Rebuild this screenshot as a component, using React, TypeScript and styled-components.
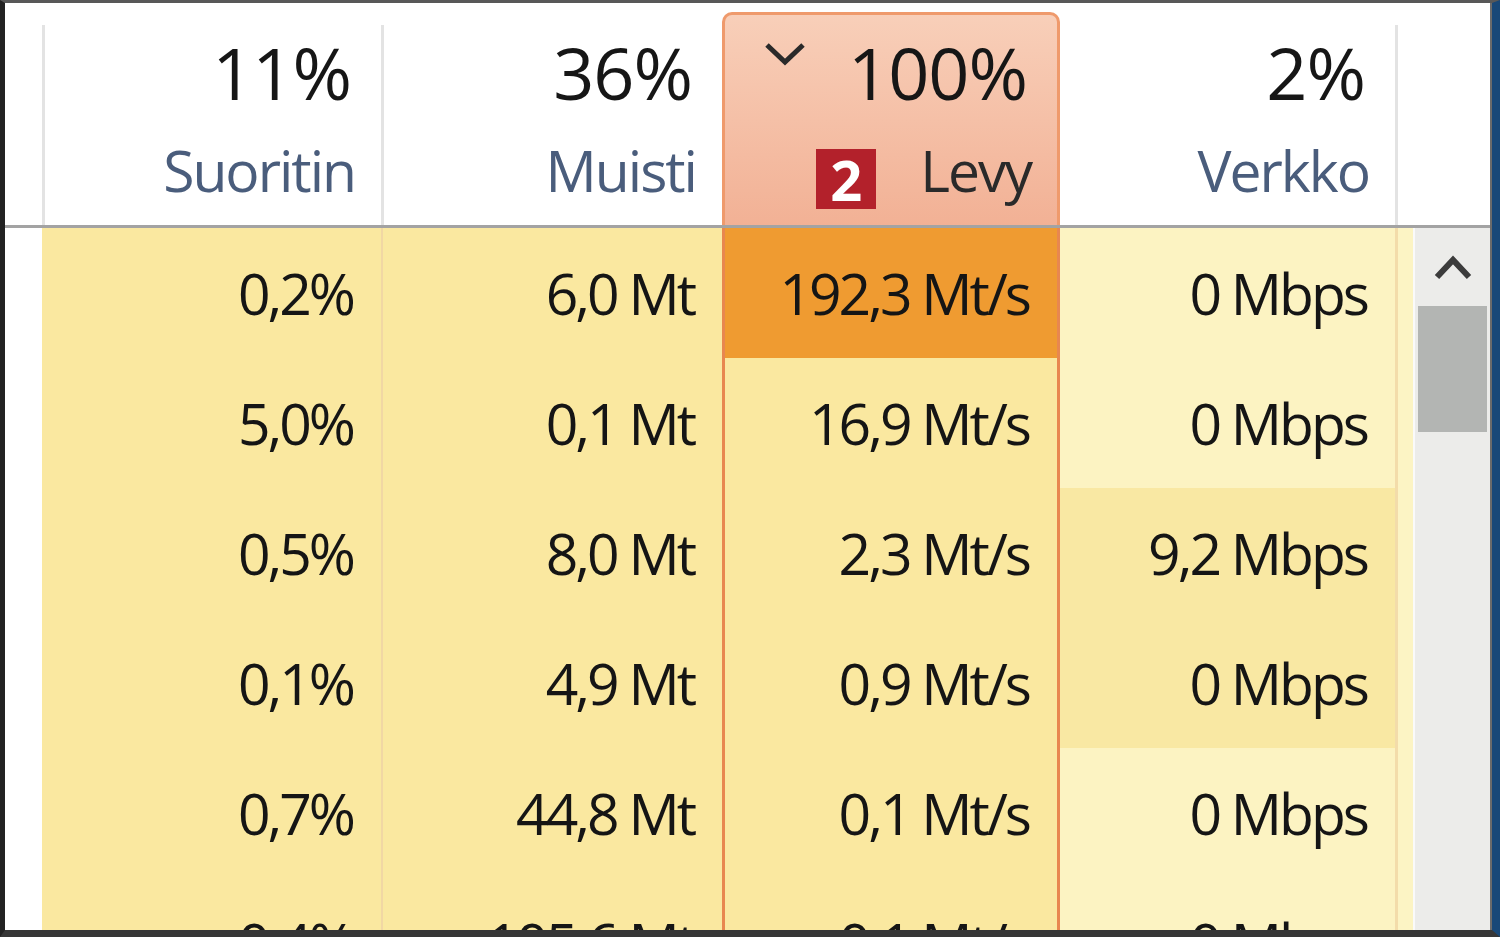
import React from "react";
import styled, { createGlobalStyle } from "styled-components";

const GlobalStyle = createGlobalStyle`
  html, body { margin: 0; padding: 0; background: #fff; overflow: hidden; }
  #root { width: 1500px; height: 937px; }
`;

const Frame = styled.div`
  width: 1500px;
  height: 937px;
  box-sizing: border-box;
  border-top: 3px solid #585858;
  border-left: 5px solid #222;
  border-right: 8px solid #184878;
  border-bottom: 7px solid #363636;
  background: #fff;
  overflow: hidden;
  display: flex;
  flex-direction: column;
  font-family: "Open Sans", "Noto Sans", sans-serif;
`;

const Inner = styled.div`
  flex: 1;
  min-height: 0;
  display: flex;
  flex-direction: column;
  border-right: 2px solid #6b6b6b;
`;

const Header = styled.div`
  display: grid;
  grid-template-columns: 37px 339px 341px 338px 335px 1fr;
  height: 222px;
  flex-shrink: 0;
  border-bottom: 3px solid #a3a3a3;
`;

const HeaderCell = styled.div<{ $active?: boolean; $sep?: boolean }>`
  box-sizing: border-box;
  margin-top: ${(p) => (p.$active ? 9 : 22)}px;
  display: flex;
  flex-direction: column;
  justify-content: flex-end;
  padding: 0 30px 26px 0;
  border-left: ${(p) => (p.$sep ? "3px solid #e3e3e3" : "none")};
  ${(p) =>
    p.$active &&
    `
    border: 3px solid #ef9a6c;
    border-bottom: none;
    border-radius: 10px 10px 0 0;
    background: linear-gradient(#f8cfb9, #f2b195);
    padding-left: 39px;
  `}
`;

const PctRow = styled.div`
  display: flex;
  justify-content: flex-end;
  align-items: flex-start;
`;

const Pct = styled.div`
  font-size: 72px;
  line-height: 72px;
  letter-spacing: -1px;
  color: #161616;
  margin-left: auto;
`;

const Chevron = styled.svg`
  margin-top: 6px;
  flex-shrink: 0;
`;

const LabelRow = styled.div`
  display: flex;
  justify-content: flex-end;
  align-items: flex-start;
  margin-top: 34px;
`;

const Label = styled.div<{ $dark?: boolean }>`
  font-size: 57px;
  line-height: 57px;
  letter-spacing: -2px;
  margin-right: -4px;
  color: ${(p) => (p.$dark ? "#2a2a2a" : "#4a5d7c")};
`;

const Badge = styled.div`
  width: 60px;
  height: 60px;
  margin-top: 7px;
  margin-bottom: -10px;
  margin-right: 44px;
  background: #b3212b;
  color: #fff;
  font-weight: 700;
  font-size: 56px;
  line-height: 60px;
  text-align: center;
  flex-shrink: 0;
`;

const Body = styled.div`
  flex: 1;
  min-height: 0;
  display: flex;
  overflow: hidden;
`;

const Table = styled.div`
  width: 1408px;
  display: flex;
  flex-direction: column;
`;

const Row = styled.div`
  display: grid;
  grid-template-columns: 37px 339px 341px 338px 335px 18px;
  height: 130px;
  flex-shrink: 0;
`;

const Gutter = styled.div`
  background: #fff;
`;

const DataCell = styled.div<{ $bg: string; $sep?: boolean; $disk?: boolean }>`
  box-sizing: border-box;
  background: ${(p) => p.$bg};
  display: flex;
  align-items: center;
  justify-content: flex-end;
  padding-right: 28px;
  font-size: 57px;
  letter-spacing: -3px;
  color: #151515;
  white-space: nowrap;
  border-left: ${(p) => (p.$sep ? "2px solid #f1d7a4" : "none")};
  ${(p) =>
    p.$disk &&
    `
    border-left: 3px solid #e8874f;
    border-right: 3px solid #e8874f;
  `}
`;

const Strip = styled.div`
  background: #fcf4c4;
  border-left: 3px solid #f3dcaa;
`;

const Scrollbar = styled.div`
  width: 77px;
  box-sizing: border-box;
  background: #ececea;
  border-left: 2px solid #fafafa;
  display: flex;
  flex-direction: column;
  align-items: center;
`;

const ScrollUp = styled.div`
  height: 78px;
  width: 100%;
  display: flex;
  align-items: center;
  justify-content: center;
`;

const Thumb = styled.div`
  width: 69px;
  height: 126px;
  background: #b3b5b3;
`;

const YELLOW = "#fae8a0";
const NET_LIGHT = "#fcf3c2";
const NET_WARM = "#f9e8a3";
const HOT = "#ef9b31";

type RowData = {
  cpu: string;
  mem: string;
  disk: string;
  net: string;
  hot?: boolean;
  netWarm?: boolean;
};

const rows: RowData[] = [
  { cpu: "0,2%", mem: "6,0 Mt", disk: "192,3 Mt/s", net: "0 Mbps", hot: true },
  { cpu: "5,0%", mem: "0,1 Mt", disk: "16,9 Mt/s", net: "0 Mbps" },
  { cpu: "0,5%", mem: "8,0 Mt", disk: "2,3 Mt/s", net: "9,2 Mbps", netWarm: true },
  { cpu: "0,1%", mem: "4,9 Mt", disk: "0,9 Mt/s", net: "0 Mbps", netWarm: true },
  { cpu: "0,7%", mem: "44,8 Mt", disk: "0,1 Mt/s", net: "0 Mbps" },
  { cpu: "0,4%", mem: "105,6 Mt", disk: "0,1 Mt/s", net: "0 Mbps" },
];

export default function App() {
  return (
    <>
      <GlobalStyle />
      <Frame>
        <Inner>
          <Header>
            <div />
            <HeaderCell $sep>
              <PctRow>
                <Pct>11%</Pct>
              </PctRow>
              <LabelRow>
                <Label>Suoritin</Label>
              </LabelRow>
            </HeaderCell>
            <HeaderCell $sep>
              <PctRow>
                <Pct>36%</Pct>
              </PctRow>
              <LabelRow>
                <Label>Muisti</Label>
              </LabelRow>
            </HeaderCell>
            <HeaderCell $active>
              <PctRow>
                <Chevron width="42" height="24" viewBox="0 0 42 24">
                  <polyline
                    points="3,3 21,20 39,3"
                    fill="none"
                    stroke="#2a2a2a"
                    strokeWidth="5"
                  />
                </Chevron>
                <Pct>100%</Pct>
              </PctRow>
              <LabelRow>
                <Badge>2</Badge>
                <Label $dark>Levy</Label>
              </LabelRow>
            </HeaderCell>
            <HeaderCell>
              <PctRow>
                <Pct>2%</Pct>
              </PctRow>
              <LabelRow>
                <Label>Verkko</Label>
              </LabelRow>
            </HeaderCell>
            <HeaderCell $sep />
          </Header>
          <Body>
            <Table>
              {rows.map((r, i) => (
                <Row key={i}>
                  <Gutter />
                  <DataCell $bg={YELLOW}>{r.cpu}</DataCell>
                  <DataCell $bg={YELLOW} $sep>
                    {r.mem}
                  </DataCell>
                  <DataCell $bg={r.hot ? HOT : YELLOW} $disk>
                    {r.disk}
                  </DataCell>
                  <DataCell $bg={r.netWarm ? NET_WARM : NET_LIGHT}>{r.net}</DataCell>
                  <Strip />
                </Row>
              ))}
            </Table>
            <Scrollbar>
              <ScrollUp>
                <svg width="40" height="30" viewBox="0 0 40 30">
                  <polyline
                    points="4,25 20,8 36,25"
                    fill="none"
                    stroke="#3c3c3c"
                    strokeWidth="6"
                  />
                </svg>
              </ScrollUp>
              <Thumb />
            </Scrollbar>
          </Body>
        </Inner>
      </Frame>
    </>
  );
}
